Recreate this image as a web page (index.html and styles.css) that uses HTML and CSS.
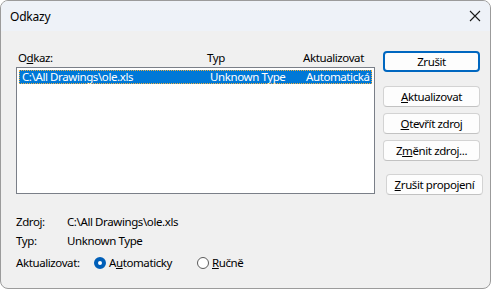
FILE: index.html
```html
<!DOCTYPE html>
<html lang="cs">
<head>
    <meta charset="UTF-8">
    <title>Odkazy</title>
    <link rel="stylesheet" href="styles.css">
</head>
<body>
    <div class="window">
        <div class="titlebar">
            <span class="title">Odkazy</span>
            <svg class="close" width="12" height="12" viewBox="0 0 12 12">
                <path d="M1 1 L11 11 M11 1 L1 11" stroke="#1a1a1a" stroke-width="1.1" fill="none"/>
            </svg>
        </div>

        <div class="content">
            <div class="left">
                <div class="list-head">
                    <span class="col-link">O<u>d</u>kaz:</span>
                    <span class="col-type">Typ</span>
                    <span class="col-upd">Aktualizovat</span>
                </div>
                <div class="listbox">
                    <div class="row selected">
                        <span class="col-link">C:\All Drawings\ole.xls</span>
                        <span class="col-type">Unknown Type</span>
                        <span class="col-upd">Automatická</span>
                    </div>
                </div>

                <div class="details">
                    <div class="detail-row">
                        <span class="label">Zdroj:</span>
                        <span>C:\All Drawings\ole.xls</span>
                    </div>
                    <div class="detail-row">
                        <span class="label">Typ:</span>
                        <span>Unknown Type</span>
                    </div>
                    <div class="detail-row update-row">
                        <span class="label-wide">Aktualizovat:</span>
                        <label class="radio"><span class="dot checked"></span>A<u>u</u>tomaticky</label>
                        <label class="radio"><span class="dot"></span><u>R</u>učně</label>
                    </div>
                </div>
            </div>

            <div class="buttons">
                <button class="btn default">Zrušit</button>
                <button class="btn first"><u>A</u>ktualizovat</button>
                <button class="btn"><u>O</u>tevřít zdroj</button>
                <button class="btn">Z<u>m</u>ěnit zdroj...</button>
                <button class="btn unlink"><u>Z</u>rušit propojení</button>
            </div>
        </div>
    </div>
</body>
</html>
```

FILE: styles.css
```css
body {
    margin: 0;
    padding: 0;
    background: #ffffff;
    font-family: 'Noto Sans', 'Liberation Sans', sans-serif;
    font-size: 11.5px;
    letter-spacing: -0.4px;
    color: #000;
}

.window {
    width: 491px;
    height: 289px;
    box-sizing: border-box;
    border: 1px solid #9b9b9b;
    border-radius: 8px;
    background: #f0f0f0;
    overflow: hidden;
}

.titlebar {
    height: 30px;
    background: #eef2f8;
    display: flex;
    align-items: center;
    justify-content: space-between;
    padding: 0 9px 0 9px;
}

.title {
    font-size: 12px;
    letter-spacing: -0.2px;
}

.content {
    display: flex;
    padding: 16px 0 0 15px;
}

.left {
    width: 359px;
}

.list-head {
    display: flex;
    height: 20px;
    align-items: center;
    padding-left: 2px;
}

.col-link {
    width: 189px;
}

.col-type {
    width: 96px;
}

.listbox {
    height: 121px;
    background: #fff;
    border: 1px solid #7a7f88;
    padding: 2px;
}

.row {
    display: flex;
    height: 14px;
    line-height: 14px;
    padding-left: 3px;
}

.row .col-link {
    width: 188px;
}

.selected {
    background: #0078d7;
    color: #fff;
    outline: 1px dotted #f0b040;
    outline-offset: -1px;
}

.details {
    padding-top: 18px;
}

.detail-row {
    display: flex;
    height: 19px;
    align-items: center;
}

.label {
    width: 51px;
}

.update-row {
    margin-top: 3px;
}

.label-wide {
    width: 78px;
}

.radio {
    display: flex;
    align-items: center;
    width: 103px;
}

.dot {
    width: 10px;
    height: 10px;
    border: 1px solid #5b5b5b;
    border-radius: 50%;
    background: #fff;
    margin-right: 3px;
}

.dot.checked {
    border: 4px solid #005fb8;
    width: 4px;
    height: 4px;
}

.buttons {
    display: flex;
    flex-direction: column;
    padding-left: 8px;
    padding-top: 4px;
}

.btn {
    width: 97px;
    height: 21px;
    box-sizing: border-box;
    border: 1px solid #d3d3d3;
    border-bottom-color: #c2c2c2;
    border-radius: 4px;
    background: #fdfdfd;
    font-family: inherit;
    font-size: 11.5px;
    letter-spacing: -0.4px;
    padding: 0;
    margin-bottom: 6px;
    color: #000;
}

.btn.default {
    border: 2px solid #0067c0;
    margin-bottom: 14px;
}

.btn.unlink {
    margin-top: 7px;
    margin-left: 3px;
}
```
